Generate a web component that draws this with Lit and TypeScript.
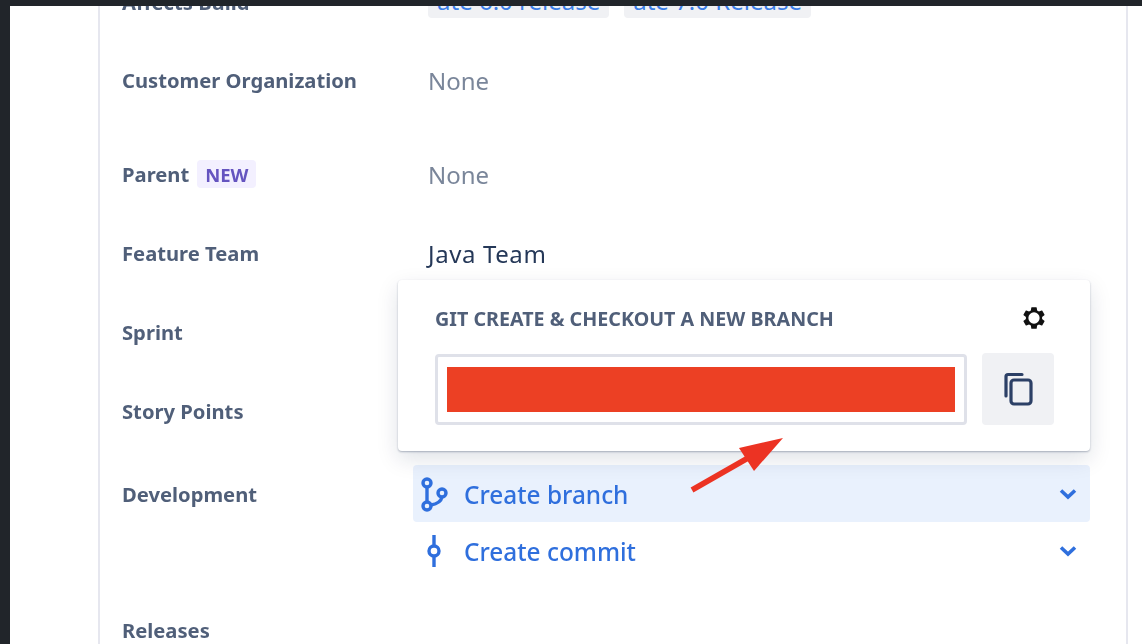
import { LitElement, html, css } from "lit";
import { customElement } from "lit/decorators.js";

@customElement("app-root")
export class AppRoot extends LitElement {
  static styles = css`
    :host {
      display: block;
      position: relative;
      width: 1142px;
      height: 644px;
      overflow: hidden;
      background: #21252a;
      font-family: "Noto Sans", "Open Sans", sans-serif;
    }
    .canvas {
      position: absolute;
      inset: 6px 0 0 10px;
      background: #fff;
      overflow: hidden;
      padding-left: 88px;
      padding-right: 14px;
    }
    .card {
      height: 800px;
      border-left: 2px solid #e6e7ef;
      border-right: 2px solid #e6e7ef;
      padding-left: 22px;
      margin-top: -15px;
    }
    .row {
      display: grid;
      grid-template-columns: 306px 1fr;
      align-items: start;
    }
    .h78 { height: 78px; }
    .h94 { height: 94px; }
    .h79 { height: 79px; }
    .h83 { height: 83px; }
    .h136 { height: 136px; }
    .label {
      display: flex;
      align-items: center;
      gap: 8px;
      height: 22px;
      font-size: 20.2px;
      font-weight: 700;
      color: #505f79;
      white-space: nowrap;
      filter: blur(0.4px);
    }
    .new {
      display: flex;
      align-items: center;
      height: 28px;
      padding: 0 8px;
      border-radius: 4px;
      background: #f3f0ff;
      color: #6554c0;
      font-size: 18.5px;
      font-weight: 700;
    }
    .value {
      height: 24px;
      line-height: 24px;
      font-size: 24px;
      color: #7a869a;
      white-space: nowrap;
      filter: blur(0.4px);
    }
    .value.strong { color: #253858; letter-spacing: 0.6px; }
    .tags {
      display: flex;
      gap: 15px;
      margin-top: -3px;
    }
    .tag {
      display: flex;
      align-items: center;
      height: 30px;
      box-sizing: border-box;
      padding: 0 9px 5px;
      border-radius: 4px;
      background: #f0f1f4;
      color: #3b7ee8;
      font-size: 24px;
      white-space: nowrap;
    }
    .dev {
      margin: -18px 36px 0 -15px;
    }
    .dev-row {
      display: flex;
      align-items: center;
      height: 57px;
      padding-left: 6px;
      padding-right: 13px;
      border-radius: 4px;
      color: #2f6fdd;
      font-size: 24.4px;
      font-weight: 500;
    }
    .dev-row.active { background: #e9f1fd; }
    .dev-icon { flex: none; width: 30px; height: 40px; margin-right: 15px; }
    .dev-text { flex: 1; padding-top: 2px; filter: blur(0.4px); }
    .chev { flex: none; width: 18px; height: 12px; }
    .pop {
      position: absolute;
      left: 398px;
      top: 280px;
      width: 692px;
      height: 171px;
      box-sizing: border-box;
      padding: 25px 36px 0 37px;
      background: #fff;
      border-radius: 4px;
      box-shadow: 0 8px 22px rgba(9, 30, 66, 0.13), 0 1px 2px rgba(9, 30, 66, 0.3);
    }
    .pop-head {
      display: flex;
      align-items: center;
      justify-content: space-between;
      height: 26px;
      padding-right: 7px;
      font-size: 19.7px;
      font-weight: 700;
      color: #505f79;
      white-space: nowrap;
    }
    .pop-title { filter: blur(0.4px); }
    .gear { width: 26px; height: 26px; display: block; }
    .pop-body {
      display: flex;
      gap: 15px;
      margin-top: 22px;
    }
    .input {
      flex: 1;
      height: 71px;
      box-sizing: border-box;
      margin-top: 1px;
      padding: 10px 9px;
      border: 3px solid #dfe1e9;
      border-radius: 4px;
    }
    .redact { height: 45px; background: #ec4024; }
    .copy {
      flex: none;
      display: flex;
      align-items: center;
      justify-content: center;
      width: 72px;
      height: 72px;
      border-radius: 4px;
      background: #f0f1f4;
    }
    .copy svg { width: 30px; height: 34px; display: block; }
    .arrow {
      position: absolute;
      left: 680px;
      top: 430px;
      width: 120px;
      height: 70px;
    }
  `;

  render() {
    return html`
      <div class="canvas">
        <div class="card">
          <div class="row h78">
            <div class="label">Affects Build</div>
            <div class="tags">
              <span class="tag">ate 6.0 release</span>
              <span class="tag">ate 7.0 Release</span>
            </div>
          </div>
          <div class="row h94">
            <div class="label">Customer Organization</div>
            <div class="value">None</div>
          </div>
          <div class="row h79">
            <div class="label">Parent <span class="new">NEW</span></div>
            <div class="value">None</div>
          </div>
          <div class="row h79">
            <div class="label">Feature Team</div>
            <div class="value strong">Java Team</div>
          </div>
          <div class="row h79"><div class="label">Sprint</div></div>
          <div class="row h83"><div class="label">Story Points</div></div>
          <div class="row h136">
            <div class="label">Development</div>
            <div class="dev">
              <div class="dev-row active">
                <svg class="dev-icon" viewBox="0 0 30 40" fill="none" stroke="currentColor" stroke-width="3.4">
                  <circle cx="8" cy="9" r="4"></circle>
                  <circle cx="23" cy="19" r="4"></circle>
                  <circle cx="8" cy="32" r="4"></circle>
                  <path d="M8 13V28M12 31C18 30 22 28 23 23"></path>
                </svg>
                <span class="dev-text">Create branch</span>
                <svg class="chev" viewBox="0 0 18 12" fill="none" stroke="currentColor" stroke-width="3.6">
                  <path d="M2 2.5L9 9L16 2.5"></path>
                </svg>
              </div>
              <div class="dev-row">
                <svg class="dev-icon" viewBox="0 0 30 40" fill="none" stroke="currentColor" stroke-width="3.4">
                  <circle cx="15" cy="20" r="5"></circle>
                  <path d="M15 4V15M15 25V36"></path>
                </svg>
                <span class="dev-text">Create commit</span>
                <svg class="chev" viewBox="0 0 18 12" fill="none" stroke="currentColor" stroke-width="3.6">
                  <path d="M2 2.5L9 9L16 2.5"></path>
                </svg>
              </div>
            </div>
          </div>
          <div class="row"><div class="label">Releases</div></div>
        </div>
      </div>

      <div class="pop">
        <div class="pop-head">
          <span class="pop-title">GIT CREATE &amp; CHECKOUT A NEW BRANCH</span>
          <svg class="gear" viewBox="0 0 24 24" fill="#111">
            <path d="M19.43 12.98c.04-.32.07-.64.07-.98 0-.34-.03-.66-.07-.98l2.11-1.65c.19-.15.24-.42.12-.64l-2-3.46c-.09-.16-.26-.25-.44-.25-.06 0-.12.01-.17.03l-2.49 1c-.52-.4-1.08-.73-1.69-.98l-.38-2.65C14.46 2.18 14.25 2 14 2h-4c-.25 0-.46.18-.49.42l-.38 2.65c-.61.25-1.17.59-1.69.98l-2.49-1c-.06-.02-.12-.03-.18-.03-.17 0-.34.09-.43.25l-2 3.46c-.13.22-.07.49.12.64l2.11 1.65c-.04.32-.07.65-.07.98 0 .33.03.66.07.98l-2.11 1.65c-.19.15-.24.42-.12.64l2 3.46c.09.16.26.25.44.25.06 0 .12-.01.17-.03l2.49-1c.52.4 1.08.73 1.69.98l.38 2.65c.03.24.24.42.49.42h4c.25 0 .46-.18.49-.42l.38-2.65c.61-.25 1.17-.59 1.69-.98l2.49 1c.06.02.12.03.18.03.17 0 .34-.09.43-.25l2-3.46c.12-.22.07-.49-.12-.64l-2.11-1.65z"></path>
            <path d="M12 6.8a5.2 5.2 0 1 0 0 10.4a5.2 5.2 0 1 0 0-10.4z" fill="#fff"></path>
          </svg>
        </div>
        <div class="pop-body">
          <div class="input"><div class="redact"></div></div>
          <div class="copy">
            <svg viewBox="0 0 30 34" fill="none" stroke="#2c4066" stroke-width="3.2" stroke-linejoin="round" stroke-linecap="round">
              <path d="M3 24V4.5Q3 2.5 5 2.5H19"></path>
              <rect x="8" y="8" width="20" height="24" rx="3"></rect>
            </svg>
          </div>
        </div>
      </div>

      <svg class="arrow" viewBox="0 0 120 70">
        <path d="M12 60L68 28" stroke="#ec3323" stroke-width="5.5" stroke-linecap="butt"></path>
        <path d="M103 8L59 18L74 41Z" fill="#ec3323"></path>
      </svg>
    `;
  }
}
